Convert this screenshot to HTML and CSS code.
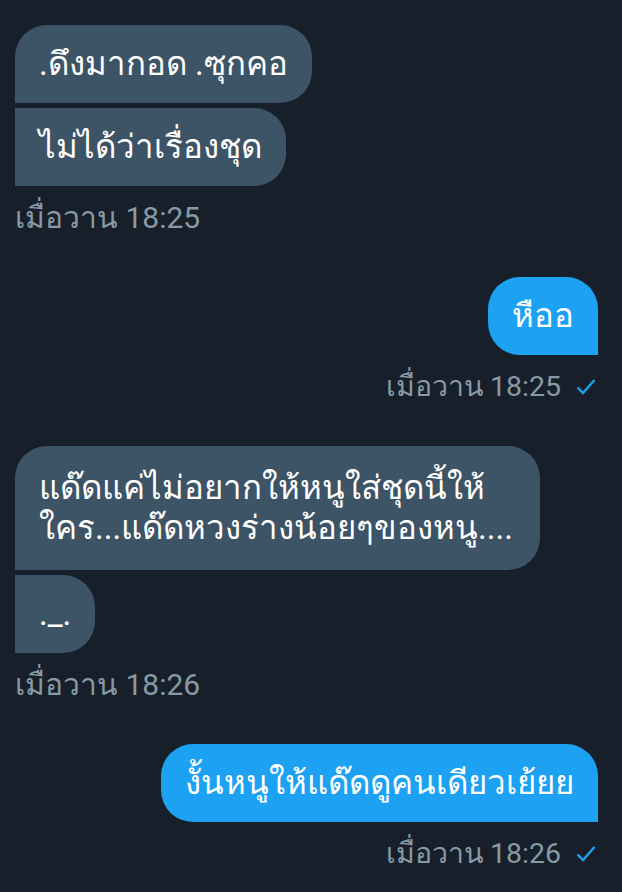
FILE: index.html
```html
<html>
<head>
<meta charset="utf-8">
<link rel="stylesheet" href="styles.css">
</head>
<body>
<div class="chat">

    <div class="group in">
        <div class="bubble first">.ดึงมากอด .ซุกคอ</div>
        <div class="bubble last">ไม่ได้ว่าเรื่องชุด</div>
        <div class="meta">เมื่อวาน 18:25</div>
    </div>

    <div class="group out">
        <div class="bubble single">หืออ</div>
        <div class="meta">เมื่อวาน 18:25
            <svg class="tick" viewBox="0 0 24 24"><path d="M3.5 12.5l5.5 5.5L20.5 5"/></svg>
        </div>
    </div>

    <div class="group in">
        <div class="bubble first wide">แด๊ดแค่ไม่อยากให้หนูใส่ชุดนี้ให้ใคร...แด๊ดหวงร่างน้อยๆของหนู....</div>
        <div class="bubble last">._.</div>
        <div class="meta">เมื่อวาน 18:26</div>
    </div>

    <div class="group out">
        <div class="bubble single">งั้นหนูให้แด๊ดดูคนเดียวเย้ยย</div>
        <div class="meta">เมื่อวาน 18:26
            <svg class="tick" viewBox="0 0 24 24"><path d="M3.5 12.5l5.5 5.5L20.5 5"/></svg>
        </div>
    </div>

</div>
</body>
</html>
```

FILE: styles.css
```css
body {
    margin: 0;
    background-color: #17202a;
    font-family: Roboto, "Noto Sans", sans-serif;
}
.chat {
    padding: 25px 24px 0 15px;
    display: flex;
    flex-direction: column;
    gap: 42px;
}
.group {
    display: flex;
    flex-direction: column;
    gap: 5px;
}
.group.in {
    align-items: flex-start;
}
.group.out {
    align-items: flex-end;
}
.bubble {
    font-size: 33px;
    line-height: 40px;
    color: white;
    padding: 19px 24px;
    border-radius: 32px;
}
.in .bubble {
    background-color: #3d5466;
}
.out .bubble {
    background-color: #1da1f2;
}
.in .first {
    border-bottom-left-radius: 0;
}
.in .last {
    border-top-left-radius: 0;
    border-bottom-left-radius: 0;
}
.out .single {
    border-bottom-right-radius: 0;
}
.wide {
    max-width: 477px;
    padding-top: 22px;
    padding-bottom: 22px;
}
.meta {
    margin-top: 10px;
    font-size: 30px;
    line-height: 34px;
    color: #8899a6;
    display: flex;
    align-items: center;
    gap: 13px;
}
.out .meta {
    font-size: 28.5px;
}
.tick {
    width: 24px;
    height: 24px;
    fill: none;
    stroke: #1da1f2;
    stroke-width: 2.4;
}
```
